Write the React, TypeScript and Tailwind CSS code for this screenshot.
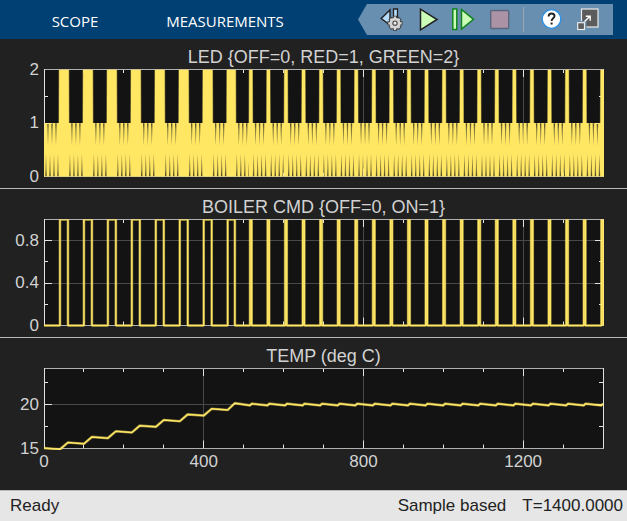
import type { ReactNode } from 'react';

type Point = [number, number];

type Axis = {
  title: string;
  height: number;
  viewHeight: number;
  min: number;
  max: number;
  major: number[];
  minor: number[];
  data: Point[];
  traceWidth: number;
  showTime?: boolean;
};

const LEFT = 44;
const RIGHT = 603;
const T_END = 1400;
const CYCLES = [0, 1, 2, 3, 4, 5, 6, 7];

const xOf = (t: number) => LEFT + (t / T_END) * (RIGHT - LEFT);

// Boiler on-windows: long heating bursts first, then short top-ups at the set point.
const pulses: Point[] = [
  ...CYCLES.map((i): Point => [40 + i * 60, i === 7 ? 478 : 60 + i * 60]),
  ...Array.from({ length: 21 }, (_, i): Point => [516 + i * 44, 520 + i * 44]),
];

function ledTrace(): Point[] {
  const out: Point[] = [];
  let t = 0;
  for (const [on, off] of pulses) {
    let high = false;
    for (; t < on; t += 5) {
      out.push([t, high ? 1 : 0]);
      high = !high;
    }
    high = false;
    for (t = on; t <= off; t += 1) {
      out.push([t, high ? 2 : 0]);
      high = !high;
    }
    t = off;
  }
  return out;
}

function boilerTrace(): Point[] {
  const out: Point[] = [[0, 0]];
  for (const [on, off] of pulses) {
    out.push([on, 0], [on, 1], [off, 1], [off, 0]);
  }
  return out;
}

function tempTrace(): Point[] {
  const out: Point[] = [[0, 15.05]];
  pulses.forEach(([on, off], i) => {
    if (i < 8) out.push([on, 14.9 + i * 0.64], [off, 15.68 + i * 0.64]);
    else out.push([on, 19.9], [off, 20.1]);
  });
  return out;
}

const axes: Axis[] = [
  {
    title: 'LED {OFF=0, RED=1, GREEN=2}',
    height: 107,
    viewHeight: 108,
    min: 0,
    max: 2,
    major: [0, 1, 2],
    minor: [0.5, 1.5],
    data: ledTrace(),
    traceWidth: 2.3,
  },
  {
    title: 'BOILER CMD {OFF=0, ON=1}',
    height: 106,
    viewHeight: 107,
    min: 0,
    max: 1,
    major: [0, 0.4, 0.8],
    minor: [0.2, 0.6],
    data: boilerTrace(),
    traceWidth: 1.5,
  },
  {
    title: 'TEMP (deg C)',
    height: 80,
    viewHeight: 111,
    min: 15,
    max: 24.1,
    major: [15, 20],
    minor: [17.5, 22.5],
    data: tempTrace(),
    traceWidth: 1.5,
    showTime: true,
  },
];

const timeMinor = Array.from({ length: 13 }, (_, i) => (i + 1) * 100);

function ScopeAxis({ axis, id }: { axis: Axis; id: string }) {
  const yOf = (v: number) => 0.5 + axis.height * (1 - (v - axis.min) / (axis.max - axis.min));
  const bottom = yOf(axis.min);
  const points = axis.data.map(([t, v]) => `${xOf(t).toFixed(2)},${yOf(v).toFixed(2)}`).join(' ');

  return (
    <section className="border-b border-[#b9b9b9] bg-[#212121] pt-1.5 pb-[11px]">
      <h2 className="pr-[24px] pl-[44px] text-center text-[18px] leading-6 text-[#d2d2d2]">{axis.title}</h2>
      <svg
        viewBox={`0 0 627 ${axis.viewHeight}`}
        className="block w-full overflow-visible"
        role="img"
        aria-label={axis.title}
      >
        <clipPath id={id}>
          <rect x={LEFT} y={0.5} width={RIGHT - LEFT + 1} height={axis.height + 1.5} />
        </clipPath>
        <rect x={LEFT} y={0} width={RIGHT - LEFT + 1} height={axis.height + 1} fill="#131313" />

        <g stroke="#484848">
          {axis.major.map((v) => (
            <line key={v} x1={LEFT} x2={RIGHT} y1={Math.floor(yOf(v)) + 0.5} y2={Math.floor(yOf(v)) + 0.5} />
          ))}
          {[400, 800, 1200].map((t) => (
            <line key={t} x1={Math.floor(xOf(t)) + 0.5} x2={Math.floor(xOf(t)) + 0.5} y1={0} y2={bottom} />
          ))}
        </g>

        <g stroke="#e2e2e2">
          {timeMinor.map((t) => {
            const x = Math.floor(xOf(t)) + 0.5;
            const len = t % 400 === 0 ? 8 : 4;
            return <path key={t} d={`M${x} 0v${len}M${x} ${bottom}v${-len}`} />;
          })}
          {axis.major.map((v) => {
            const y = Math.floor(yOf(v)) + 0.5;
            return <path key={v} d={`M${LEFT} ${y}h8M${RIGHT} ${y}h-8`} />;
          })}
          {axis.minor.map((v) => {
            const y = Math.floor(yOf(v)) + 0.5;
            return <path key={v} d={`M${LEFT} ${y}h4M${RIGHT} ${y}h-4`} />;
          })}
        </g>
        <path d={`M${LEFT} 0.5H${RIGHT + 1}M${LEFT} ${bottom}H${RIGHT + 1}`} stroke="#b0b0b0" />
        <path d={`M${LEFT + 0.5} 0V${bottom}M${RIGHT + 0.5} 0V${bottom}`} stroke="#e2e2e2" />

        <g clipPath={`url(#${id})`} fill="none" stroke="#ffe764" strokeLinejoin="bevel">
          <polyline points={points} strokeWidth={axis.traceWidth + 1.2} opacity={0.5} />
          <polyline points={points} strokeWidth={axis.traceWidth} />
        </g>

        <g fill="#d2d2d2" fontSize={17}>
          {axis.major.map((v) => (
            <text key={v} x={39} y={yOf(v) + 5} textAnchor="end">
              {v}
            </text>
          ))}
          {axis.showTime &&
            [0, 400, 800, 1200].map((t) => (
              <text key={t} x={xOf(t)} y={bottom + 18} textAnchor="middle">
                {t}
              </text>
            ))}
        </g>
      </svg>
    </section>
  );
}

function ToolButton({ label, children }: { label: string; children: ReactNode }) {
  return (
    <button type="button" aria-label={label} className="flex h-[31px] w-9 items-center justify-center">
      <svg viewBox="0 0 24 24" className="size-6" fill="none">
        {children}
      </svg>
    </button>
  );
}

function GearIcon() {
  return (
    <>
      <path d="M10 2v15L1.2 10.5z" fill="#b5dcfa" stroke="#222" strokeWidth={1.4} />
      <path d="M13.5 1h4v11h-4z" fill="#b5dcfa" stroke="#222" strokeWidth={1.3} />
      <g stroke="#3c3c3c" strokeWidth={4}>
        <path d="M15 7.8v15M7.5 15.3h15M9.8 10.1l10.4 10.4M20.2 10.1l-10.4 10.4" />
      </g>
      <circle cx={15} cy={15.3} r={6} fill="#d4d4d4" stroke="#3c3c3c" />
      <g stroke="#d4d4d4" strokeWidth={2.2}>
        <path d="M15 8.6v13.4M8.3 15.3h13.4M10.4 10.7l9.2 9.2M19.6 10.7l-9.2 9.2" />
      </g>
      <circle cx={15} cy={15.3} r={5} fill="#d4d4d4" />
      <circle cx={15} cy={15.3} r={2.1} fill="#eee" stroke="#555" strokeWidth={1.3} />
    </>
  );
}

function Toolbar() {
  return (
    <div
      role="toolbar"
      aria-label="Simulation"
      className="flex h-[31px] items-center bg-[#698fb0] pr-[7px] pl-4 [clip-path:polygon(9px_0,100%_0,100%_100%,9px_100%,0_50%)]"
    >
      <ToolButton label="Configure step back">
        <GearIcon />
      </ToolButton>
      <ToolButton label="Run">
        <path d="M4.5 1.2v20.6l16.5-10.3z" fill="#cbffb8" stroke="#222" strokeWidth={1.5} />
      </ToolButton>
      <ToolButton label="Step forward">
        <path d="M0.8 1h4v20.5h-4z" fill="#cbffb8" stroke="#12841f" strokeWidth={1.5} />
        <path d="M9.5 1.5v19.6l12-9.8z" fill="#cbffb8" stroke="#12841f" strokeWidth={1.5} />
      </ToolButton>
      <ToolButton label="Stop">
        <rect x={2.7} y={2.5} width={18} height={18} rx={1} fill="#ab93a5" stroke="#59667d" strokeWidth={1.4} />
      </ToolButton>
      <span className="mr-2.5 ml-[5px] h-[25px] w-px bg-[#9ba6b2]" />
      <ToolButton label="Help">
        <circle cx={11.5} cy={11} r={9.3} fill="#fff" stroke="#2b8fe6" strokeWidth={1.3} />
        <path
          d="M8.6 8.5c0-2 1.2-3 3-3s2.9 1 2.9 2.6c0 2.1-2.9 2.3-2.9 4.9"
          stroke="#222"
          strokeWidth={1.9}
        />
        <path d="M10.6 14.6h2v2h-2z" fill="#222" />
      </ToolButton>
      <ToolButton label="Maximize">
        <rect x={5.5} y={1} width={16.5} height={18} fill="#5c5c5c" stroke="#ececec" strokeWidth={1.2} />
        <path d="M0.5 13h10v9.5h-10z" fill="#698fb0" />
        <rect x={1.7} y={14.7} width={6.8} height={6.8} fill="#5c5c5c" stroke="#ececec" strokeWidth={1.2} />
        <path d="M8.5 13.5l5.3-5M9.8 8.2h4.4v4.6" stroke="#fff" strokeWidth={1.4} />
      </ToolButton>
    </div>
  );
}

export default function App() {
  return (
    <div className="flex min-h-screen flex-col bg-[#212121] font-['Liberation_Sans',Arial,sans-serif]">
      <header className="flex items-start justify-between bg-[#004073] pt-1 pr-3.5 pb-1">
        <nav className="flex font-['Open_Sans','Noto_Sans',sans-serif] text-[15px] text-white">
          <button type="button" className="h-[31px] w-[150px] pt-1">
            SCOPE
          </button>
          <button type="button" className="h-[31px] w-[150px] pt-1">
            MEASUREMENTS
          </button>
        </nav>
        <Toolbar />
      </header>

      <main className="grow">
        {axes.map((axis, i) => (
          <ScopeAxis key={axis.title} axis={axis} id={`plot-${i}`} />
        ))}
      </main>

      <footer className="flex h-[30px] items-center bg-[#e6e6e6] pr-1 pl-2.5 text-[17px] text-[#222]">
        <span className="grow">Ready</span>
        <span>Sample based</span>
        <span className="pl-4">T=1400.0000</span>
      </footer>
    </div>
  );
}
